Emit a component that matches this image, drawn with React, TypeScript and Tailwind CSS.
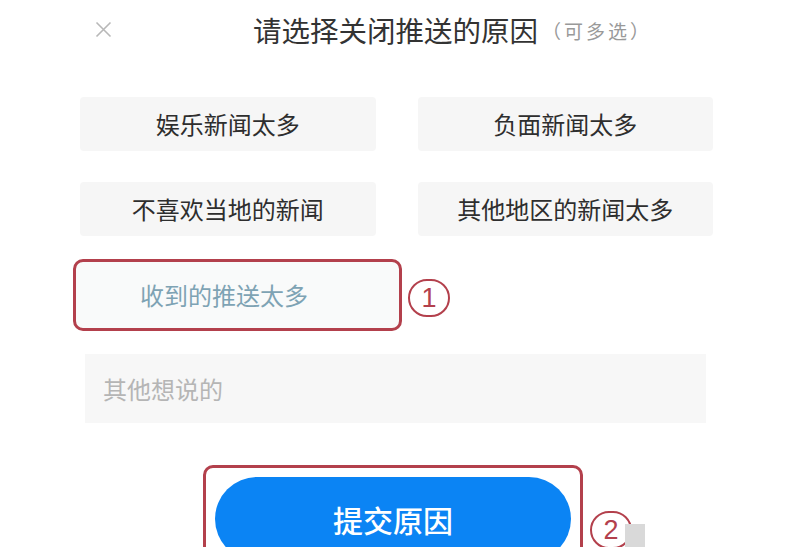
import React from "react"

const chips = ["娱乐新闻太多", "负面新闻太多", "不喜欢当地的新闻", "其他地区的新闻太多"]

function Circled({ n }: { n: string }) {
  return (
    <div className="flex h-[38px] w-[42px] items-center justify-center rounded-full border-2 border-[#b3404c] text-[27px] leading-none text-[#b3404c] font-['Liberation_Sans',sans-serif]">
      {n}
    </div>
  )
}

export default function App() {
  return (
    <div className="relative h-[547px] w-[811px] overflow-hidden bg-white font-['Noto_Sans_CJK_SC','Noto_Sans',sans-serif]">
      {/* Header */}
      <div className="flex h-[60px] items-center pl-[95px]">
        <svg width="17" height="17" viewBox="0 0 17 17" className="mt-[-2px]">
          <path d="M1.5 1.5 L15.5 15.5 M15.5 1.5 L1.5 15.5" stroke="#b8b8b8" strokeWidth="1.6" fill="none" />
        </svg>
        <span className="ml-[141px] text-[28.5px] leading-none text-[#333]">请选择关闭推送的原因</span>
        <span className="ml-[4px] text-[19px] leading-none tracking-[3px] text-[#999]">（可多选）</span>
      </div>

      {/* Options */}
      <div className="ml-[80px] mt-[37px] grid w-[633px] grid-cols-2 gap-x-[42px] gap-y-[31px]">
        {chips.map((c) => (
          <div
            key={c}
            className="flex h-[54px] items-center justify-center rounded-[4px] bg-[#f6f6f6] text-[24px] text-[#2e2e2e]"
          >
            {c}
          </div>
        ))}
      </div>

      {/* Selected option */}
      <div className="ml-[73px] mt-[23px] flex items-center">
        <div className="flex h-[72px] w-[329px] items-center rounded-[10px] border-[3px] border-[#b3404c] bg-[#f9fafa]">
          <span className="ml-[64px] text-[24px] text-[#7ea3b4]">收到的推送太多</span>
        </div>
        <div className="ml-[6px] mt-[6px]">
          <Circled n="1" />
        </div>
      </div>

      {/* Input */}
      <div className="ml-[85px] mt-[23px] flex h-[69px] w-[621px] items-center bg-[#f7f7f7] pl-[18px] text-[24px] text-[#b5b5b5]">
        其他想说的
      </div>

      {/* Submit */}
      <div className="relative ml-[203px] mt-[42px] flex items-start">
        <div className="w-[380px] rounded-[10px] border-[3px] border-[#b3404c] px-[9px] pt-[9px]">
          <div className="flex h-[84px] items-center justify-center rounded-full bg-[#0b84f4] text-[30px] font-medium text-white">
            提交原因
          </div>
        </div>
        <div className="ml-[7px] mt-[46px]">
          <Circled n="2" />
        </div>
        <div className="absolute left-[422px] top-[59px] h-[40px] w-[20px] bg-[#d9d9d9]" />
      </div>
    </div>
  )
}
